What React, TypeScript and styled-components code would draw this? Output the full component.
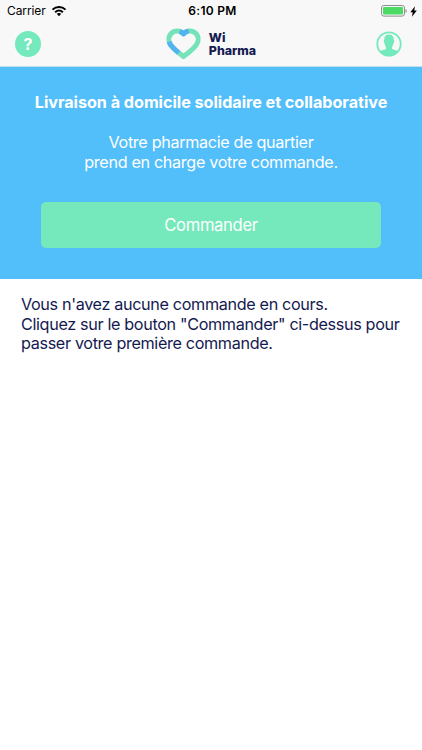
import React from "react";
import styled, { createGlobalStyle } from "styled-components";

const GlobalStyle = createGlobalStyle`
  * { box-sizing: border-box; }
  body { margin: 0; background: #fff; font-family: Inter, "Liberation Sans", sans-serif; }
`;

const Screen = styled.div`
  display: flex;
  flex-direction: column;
  width: 100%;
  height: 750px;
  background: #fff;
  overflow: hidden;
`;

const Header = styled.header`
  height: 67px;
  background: #f8f8f8;
  border-bottom: 1px solid #c5dceb;
`;

const StatusBar = styled.div`
  display: grid;
  grid-template-columns: 1fr auto 1fr;
  align-items: center;
  height: 22px;
  padding: 0 5px 0 7px;
  color: #000;
`;

const Carrier = styled.div`
  display: flex;
  align-items: center;
  gap: 5px;
  font-size: 12px;
  line-height: 22px;
  letter-spacing: -0.1px;
`;

const Clock = styled.div`
  padding-left: 1px;
  font-size: 12px;
  font-weight: 600;
  line-height: 22px;
  letter-spacing: 0.3px;
`;

const Power = styled.div`
  display: flex;
  align-items: center;
  justify-content: flex-end;
  gap: 3px;
  height: 22px;
`;

const NavBar = styled.nav`
  display: grid;
  grid-template-columns: 1fr auto 1fr;
  align-items: center;
  height: 44px;
  padding: 0 20px 0 15px;
`;

const HelpButton = styled.button`
  width: 26px;
  height: 26px;
  padding: 0;
  border: 0;
  border-radius: 50%;
  background: #74e9bb;
  color: #fff;
  font: 700 16px/26px Inter, sans-serif;
  text-align: center;
`;

const ProfileButton = styled.button`
  display: flex;
  justify-self: end;
  padding: 0;
  border: 0;
  background: none;
`;

const Brand = styled.div`
  display: flex;
  align-items: center;
  gap: 8px;
  padding-left: 5px;
`;

const BrandName = styled.div`
  display: grid;
  grid-auto-rows: 13px;
  color: #151a50;
  font-size: 12.4px;
  font-weight: 800;
  line-height: 13px;
`;

const Hero = styled.section`
  display: flex;
  flex-direction: column;
  align-items: center;
  height: 212px;
  padding: 25px 41px 0;
  background: #52befa;
  color: #fff;
  text-align: center;
  white-space: nowrap;
`;

const Title = styled.h1`
  margin: 0;
  font-size: 16.2px;
  font-weight: 700;
  line-height: 20px;
  letter-spacing: -0.04px;
`;

const Subtitle = styled.p`
  margin: 21px 0 0;
  font-size: 16.2px;
  line-height: 19.5px;
  letter-spacing: -0.34px;
`;

const OrderButton = styled.button`
  flex: none;
  width: 340px;
  height: 46px;
  margin-top: 30px;
  padding: 0;
  border: 0;
  border-radius: 5px;
  background: #75e9bb;
  color: #fff;
  font: 400 16.6px/46px Inter, sans-serif;
  letter-spacing: -0.33px;
`;

const EmptyState = styled.p`
  margin: 0;
  padding: 16px 0 0 21px;
  color: #151a50;
  font-size: 16.2px;
  line-height: 19.5px;
  letter-spacing: -0.35px;
  white-space: nowrap;
`;

const WifiIcon = () => (
  <svg width="16" height="12" viewBox="0 0 15 12" fill="none" stroke="#000" strokeWidth="2">
    <path d="M1 4.6C4.7 1 10.3 1 14 4.6" />
    <path d="M3.6 7.2c2.3-2 5.5-2 7.8 0" />
    <path d="M5.2 8.8c1.3-1.2 3.3-1.2 4.6 0L7.5 11.2z" fill="#000" stroke="none" />
  </svg>
);

const BatteryIcon = () => (
  <svg width="27" height="12" viewBox="0 0 27 12">
    <rect x="1.5" y="0.5" width="23" height="10.6" rx="2.4" fill="#f8f8f8" stroke="#8e8e8e" />
    <rect x="3" y="2" width="20" height="7.6" rx="1" fill="#4cd964" />
    <path d="M25.5 4a2.2 2.2 0 0 1 0 4z" fill="#8e8e8e" />
  </svg>
);

const BoltIcon = () => (
  <svg width="7" height="11" viewBox="0 0 7 11">
    <path d="M5 .2.3 6.2h2.4L2 10.8l4.8-6.3H4.2z" fill="#000" />
  </svg>
);

const HeartLogo = () => (
  <svg width="35" height="32" viewBox="0 0 35 32" fill="none" strokeWidth="5" strokeLinejoin="round">
    <path
      d="M17.5 5.8C14.4 2.4 9.4 1.9 6 4.7C2.3 7.8 1.9 12.9 4.7 17C7.8 21 12.5 24.8 17.5 28.6C22.5 24.8 27.2 21 30.3 17C33.1 12.9 32.7 7.8 29 4.7C25.6 1.9 20.6 2.4 17.5 5.8Z"
      stroke="#74e3b7"
    />
    <path d="M3.2 13.6C3.5 14.8 4 16 4.7 17C6.8 19.7 9.6 22.4 12.7 24.9" stroke="#52b3ee" />
    <path d="M13.6 3.3C15 3.8 16.4 4.6 17.5 5.8C18.9 4.2 20.8 3.3 22.7 2.9" stroke="#52b3ee" />
  </svg>
);

const ProfileIcon = () => (
  <svg width="26" height="26" viewBox="0 0 26 26">
    <circle cx="13" cy="13" r="11.7" fill="none" stroke="#74e9bb" strokeWidth="1.8" />
    <path
      d="M13 3.4C9.6 3.4 8 5.6 8.2 9C7.4 9.4 7.8 12 8.6 12.6C8.8 14 9.2 15 9.9 15.9V18C9 19 5.8 18.8 3.8 20.3A12 12 0 0 0 22.2 20.3C20.2 18.8 17 19 16.1 18V15.9C16.8 15 17.2 14 17.4 12.6C18.2 12 18.6 9.4 17.8 9C18 5.6 16.4 3.4 13 3.4Z"
      fill="#74e9bb"
    />
  </svg>
);

export default function App() {
  return (
    <>
      <GlobalStyle />
      <Screen>
        <Header>
          <StatusBar>
            <Carrier>Carrier<WifiIcon /></Carrier>
            <Clock>6:10 PM</Clock>
            <Power><BatteryIcon /><BoltIcon /></Power>
          </StatusBar>
          <NavBar>
            <HelpButton aria-label="Aide">?</HelpButton>
            <Brand>
              <HeartLogo />
              <BrandName><span>Wi</span><span>Pharma</span></BrandName>
            </Brand>
            <ProfileButton aria-label="Profil"><ProfileIcon /></ProfileButton>
          </NavBar>
        </Header>
        <Hero>
          <Title>Livraison à domicile solidaire et collaborative</Title>
          <Subtitle>Votre pharmacie de quartier<br />prend en charge votre commande.</Subtitle>
          <OrderButton>Commander</OrderButton>
        </Hero>
        <EmptyState>
          Vous n'avez aucune commande en cours.<br />
          Cliquez sur le bouton "Commander" ci-dessus pour<br />
          passer votre première commande.
        </EmptyState>
      </Screen>
    </>
  );
}
